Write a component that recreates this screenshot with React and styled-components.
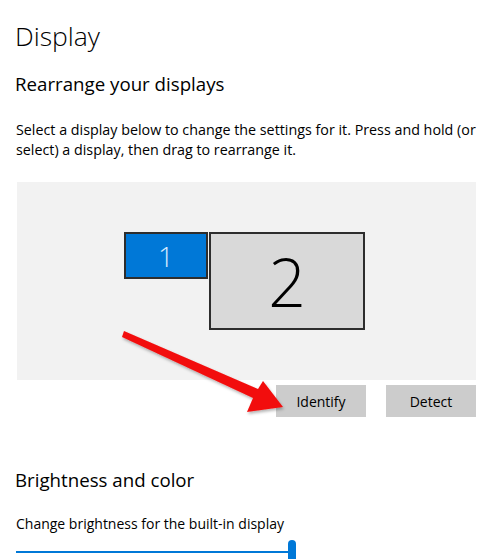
import styled, { createGlobalStyle } from "styled-components";

const GlobalStyle = createGlobalStyle`
  html, body {
    margin: 0;
    padding: 0;
    background: #ffffff;
  }
  body {
    font-family: "Open Sans", "Noto Sans", "Liberation Sans", sans-serif;
    color: #000;
    overflow: hidden;
  }
`;

const Page = styled.div`
  position: relative;
  width: 502px;
  height: 559px;
  padding: 0 0 0 15px;
  box-sizing: border-box;
`;

const Title = styled.h1`
  margin: 0;
  padding-top: 16px;
  font-size: 26.5px;
  font-weight: 300;
  line-height: 40px;
`;

const Heading = styled.h2`
  margin: ${(p) => p.$top}px 0 0 0;
  font-size: 18.7px;
  font-weight: 400;
  line-height: 28px;
`;

const Text = styled.p`
  margin: ${(p) => p.$top}px 0 0 1px;
  font-size: ${(p) => p.$size || 14}px;
  line-height: 20px;
  width: 475px;
`;

const Canvas = styled.div`
  position: relative;
  margin: 22px 0 0 2px;
  width: 459px;
  height: 198px;
  background: #f2f2f2;
`;

const Monitor = styled.div`
  position: absolute;
  box-sizing: border-box;
  display: flex;
  align-items: center;
  justify-content: center;
  border: 2px solid #2d2d2d;
  font-weight: 300;
  background: ${(p) => (p.$active ? "#0078d7" : "#d9d9d9")};
  color: ${(p) => (p.$active ? "#d6ebff" : "#000")};
  font-size: ${(p) => p.$size}px;
`;

const ButtonRow = styled.div`
  display: flex;
  justify-content: flex-end;
  gap: 20px;
  width: 461px;
  margin-top: 5px;
`;

const Button = styled.button`
  width: 90px;
  height: 32px;
  border: none;
  background: #cccccc;
  font-family: inherit;
  font-size: 14px;
  color: #000;
  padding: 0;
`;

const Slider = styled.div`
  position: relative;
  margin: 17px 0 0 1px;
  width: 276px;
  height: 2px;
  background: #0078d7;
`;

const Thumb = styled.div`
  position: absolute;
  left: 272px;
  top: -11px;
  width: 8px;
  height: 24px;
  border-radius: 4px;
  background: #0078d7;
`;

const Arrow = styled.svg`
  position: absolute;
  left: 0;
  top: 0;
  pointer-events: none;
`;

export default function App() {
  return (
    <>
      <GlobalStyle />
      <Page>
        <Title>Display</Title>
        <Heading $top={14}>Rearrange your displays</Heading>
        <Text $top={22} $size={14.3}>
          Select a display below to change the settings for it. Press and hold (or
          select) a display, then drag to rearrange it.
        </Text>
        <Canvas>
          <Monitor $active $size={28} style={{ left: 107, top: 50, width: 84, height: 47 }}>
            1
          </Monitor>
          <Monitor $size={66} style={{ left: 192, top: 50, width: 156, height: 98 }}>
            2
          </Monitor>
        </Canvas>
        <ButtonRow>
          <Button>Identify</Button>
          <Button>Detect</Button>
        </ButtonRow>
        <Heading $top={49}>Brightness and color</Heading>
        <Text $top={20}>Change brightness for the built-in display</Text>
        <Slider>
          <Thumb />
        </Slider>
        <Arrow width="502" height="559" viewBox="0 0 502 559">
          <defs>
            <filter id="sh" x="-10%" y="-10%" width="130%" height="130%">
              <feDropShadow dx="1" dy="2" stdDeviation="1.5" floodColor="#000" floodOpacity="0.3" />
            </filter>
          </defs>
          <polygon
            points="124,331 258,389 263,381 283,407 247,412 253,398 122,337"
            fill="#f20d0d"
            filter="url(#sh)"
          />
        </Arrow>
      </Page>
    </>
  );
}
